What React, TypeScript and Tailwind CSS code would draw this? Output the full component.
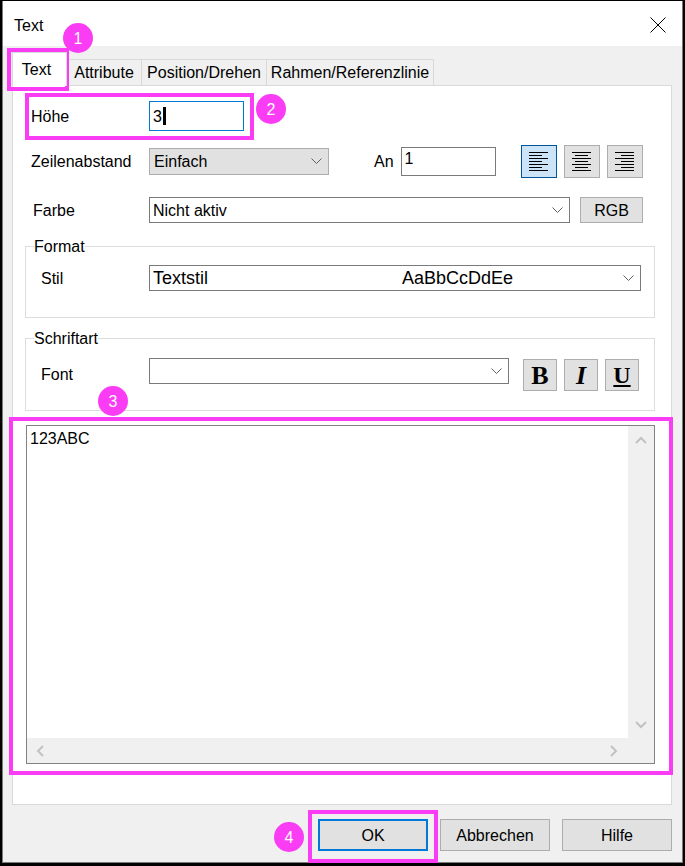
import React from 'react';

type Align = 'left' | 'center' | 'right';

function Chevron() {
  return (
    <svg width="11" height="7" viewBox="0 0 11 7" className="shrink-0">
      <polyline points="0.5,0.5 5.5,5.5 10.5,0.5" fill="none" stroke="#606060" strokeWidth="1" />
    </svg>
  );
}

function ScrollArrow({ dir }: { dir: 'up' | 'down' | 'left' | 'right' }) {
  const pts = {
    up: '1,7 6,2 11,7',
    down: '1,2 6,7 11,2',
    left: '7,1 2,6 7,11',
    right: '2,1 7,6 2,11',
  }[dir];
  const vertical = dir === 'up' || dir === 'down';
  return (
    <svg width={vertical ? 12 : 9} height={vertical ? 9 : 12} viewBox={vertical ? '0 0 12 9' : '0 0 9 12'}>
      <polyline points={pts} fill="none" stroke="#c2c2c2" strokeWidth="2" />
    </svg>
  );
}

function AlignIcon({ align }: { align: Align }) {
  const widths = [19, 13, 19, 13, 19, 13, 19];
  return (
    <svg width="19" height="19" viewBox="0 0 19 19">
      {widths.map((w, i) => {
        const x = align === 'left' ? 0 : align === 'center' ? (19 - w) / 2 : 19 - w;
        return <rect key={i} x={x} y={i * 3} width={w} height="1" fill="#000" />;
      })}
    </svg>
  );
}

function Badge({ n, className }: { n: number; className: string }) {
  return (
    <div
      className={`pointer-events-none absolute flex h-[30px] w-[30px] items-center justify-center rounded-full bg-[#fa3cf4] text-[16px] text-white ${className}`}
    >
      {n}
    </div>
  );
}

export default function App() {
  return (
    <div className="relative h-[866px] w-[685px] bg-black pb-[3px] pl-[2px] pr-[2px] pt-px font-['Liberation_Sans',Arial,sans-serif] text-[16px] leading-[17px] text-black">
      <div className="flex h-full flex-col border-x border-b border-[#7a7a7a]">
        {/* Title bar */}
        <div className="flex h-[45px] shrink-0 items-center justify-between bg-white pl-[11px] pr-[16px] pt-[3px]">
          <span>Text</span>
          <svg width="16" height="16" viewBox="0 0 16 16">
            <path d="M0.5 0.5 L15.5 15.5 M15.5 0.5 L0.5 15.5" stroke="#000" strokeWidth="1" />
          </svg>
        </div>

        {/* Body */}
        <div className="flex flex-1 flex-col bg-[#f0f0f0] pl-[9px] pr-[10px]">
          {/* Tabs */}
          <div className="flex h-[39px] items-end">
            <div className="relative z-10 -mb-px flex h-[34px] w-[55px] items-center justify-center border border-b-0 border-[#d9d9d9] bg-white pr-[6px]">
              Text
            </div>
            <div className="flex h-[26px] w-[75px] items-center justify-center border border-b-0 border-l-0 border-[#d9d9d9]">
              Attribute
            </div>
            <div className="flex h-[26px] w-[125px] items-center justify-center border border-b-0 border-l-0 border-[#d9d9d9]">
              Position/Drehen
            </div>
            <div className="flex h-[26px] w-[167px] items-center justify-center border border-b-0 border-l-0 border-[#d9d9d9]">
              Rahmen/Referenzlinie
            </div>
          </div>

          {/* Panel */}
          <div className="flex h-[720px] flex-col border border-[#d9d9d9] bg-white">
            {/* Höhe */}
            <div className="mt-[15px] flex items-center pl-[18px]">
              <span className="w-[118px]">Höhe</span>
              <div className="flex h-[30px] w-[95px] items-center border border-[#0078d7] pl-[3px]">
                3<span className="ml-px h-[18px] w-[3px] bg-black" />
              </div>
            </div>

            {/* Zeilenabstand */}
            <div className="mt-[14px] flex h-[33px] items-center pl-[18px]">
              <span className="w-[118px]">Zeilenabstand</span>
              <div className="flex h-[27px] w-[180px] items-center justify-between border border-[#adadad] bg-[#e1e1e1] pl-[4px] pr-[6px]">
                <span>Einfach</span>
                <Chevron />
              </div>
              <span className="ml-[45px]">An</span>
              <div className="ml-[7px] flex h-[29px] w-[95px] items-start border border-[#7a7a7a] pl-[3px] pt-[2px]">1</div>
              <div className="ml-[25px] flex gap-[7px]">
                <div className="flex h-[33px] w-[36px] items-center justify-center border border-[#005499] bg-[#cce4f7]">
                  <AlignIcon align="left" />
                </div>
                <div className="flex h-[33px] w-[36px] items-center justify-center border border-[#adadad] bg-[#e1e1e1]">
                  <AlignIcon align="center" />
                </div>
                <div className="flex h-[33px] w-[36px] items-center justify-center border border-[#adadad] bg-[#e1e1e1]">
                  <AlignIcon align="right" />
                </div>
              </div>
            </div>

            {/* Farbe */}
            <div className="mt-[19px] flex h-[26px] items-center pl-[18px]">
              <span className="w-[118px] pl-[2px]">Farbe</span>
              <div className="flex h-[26px] w-[421px] items-center justify-between border border-[#7a7a7a] pl-[3px] pr-[6px]">
                <span>Nicht aktiv</span>
                <Chevron />
              </div>
              <div className="ml-[10px] flex h-[26px] w-[63px] items-center justify-center border border-[#adadad] bg-[#e1e1e1]">
                RGB
              </div>
            </div>

            {/* Format */}
            <fieldset className="ml-[12px] mr-[16px] mt-[15px] border border-[#dcdcdc] pb-[26px]">
              <legend className="ml-[8px]">Format</legend>
              <div className="mt-[10px] flex items-center pl-[15px]">
                <span className="w-[108px]">Stil</span>
                <div className="flex h-[26px] w-[492px] items-center border border-[#7a7a7a] pl-[3px] pr-[6px] text-[18px]">
                  <span className="w-[249px]">Textstil</span>
                  <span className="flex-1">AaBbCcDdEe</span>
                  <Chevron />
                </div>
              </div>
            </fieldset>

            {/* Schriftart */}
            <fieldset className="ml-[12px] mr-[16px] mt-[12px] border border-[#dcdcdc] pb-[19px]">
              <legend className="ml-[8px]">Schriftart</legend>
              <div className="mt-[11px] flex h-[33px] items-center pl-[15px]">
                <span className="w-[108px]">Font</span>
                <div className="flex h-[26px] w-[360px] items-center justify-end self-start border border-[#7a7a7a] pr-[6px]">
                  <Chevron />
                </div>
                <div className="ml-[14px] flex gap-[7px] self-end">
                  <div className="flex h-[32px] w-[34px] items-center justify-center border border-[#adadad] bg-[#e1e1e1] font-['Liberation_Serif',serif] text-[26px] font-bold">
                    B
                  </div>
                  <div className="flex h-[32px] w-[34px] items-center justify-center border border-[#adadad] bg-[#e1e1e1] font-['Liberation_Serif',serif] text-[26px] font-bold italic">
                    I
                  </div>
                  <div className="flex h-[32px] w-[34px] items-center justify-center border border-[#adadad] bg-[#e1e1e1] font-['Liberation_Serif',serif] text-[24px] font-bold underline decoration-2 underline-offset-2">
                    U
                  </div>
                </div>
              </div>
            </fieldset>

            {/* Text area */}
            <div className="ml-[13px] mr-[16px] mt-[14px] flex h-[339px] flex-col border border-[#828282]">
              <div className="flex flex-1">
                <div className="flex-1 pl-[3px] pt-[4px]">123ABC</div>
                <div className="flex w-[26px] flex-col items-center justify-between bg-[#f0f0f0] pb-[9px] pt-[10px]">
                  <ScrollArrow dir="up" />
                  <ScrollArrow dir="down" />
                </div>
              </div>
              <div className="flex h-[25px] items-center justify-between bg-[#f0f0f0] pl-[9px] pr-[36px]">
                <ScrollArrow dir="left" />
                <ScrollArrow dir="right" />
              </div>
            </div>
          </div>

          {/* Buttons */}
          <div className="mt-[14px] flex justify-end gap-[12px]">
            <div className="flex h-[32px] w-[110px] items-center justify-center border-2 border-[#0078d7] bg-[#e1e1e1]">OK</div>
            <div className="flex h-[32px] w-[110px] items-center justify-center border border-[#adadad] bg-[#e1e1e1]">
              Abbrechen
            </div>
            <div className="flex h-[32px] w-[110px] items-center justify-center border border-[#adadad] bg-[#e1e1e1]">
              Hilfe
            </div>
          </div>
        </div>
      </div>

      {/* Annotations */}
      <div className="pointer-events-none absolute left-[7px] top-[48px] h-[43px] w-[62px] border-4 border-[#fa3cf4]" />
      <Badge n={1} className="left-[63px] top-[23px]" />
      <div className="pointer-events-none absolute left-[25px] top-[93px] h-[47px] w-[229px] border-4 border-[#fa3cf4]" />
      <Badge n={2} className="left-[256px] top-[94px]" />
      <div className="pointer-events-none absolute left-[9px] top-[417px] h-[358px] w-[664px] border-4 border-[#fa3cf4]" />
      <Badge n={3} className="left-[98px] top-[386px]" />
      <div className="pointer-events-none absolute left-[308px] top-[810px] h-[53px] w-[130px] border-4 border-[#fa3cf4]" />
      <Badge n={4} className="left-[274px] top-[822px]" />
    </div>
  );
}
